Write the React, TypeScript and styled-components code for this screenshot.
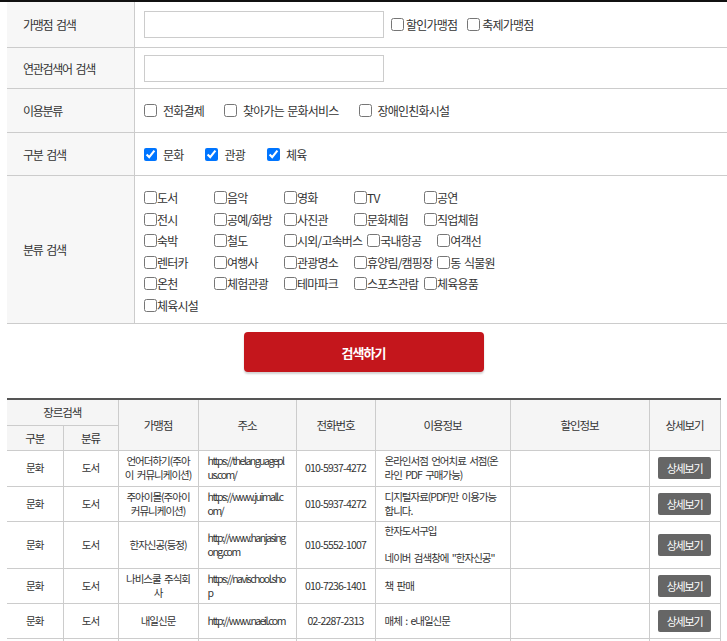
import { FC } from "react";
import styled, { createGlobalStyle } from "styled-components";

const GlobalStyle = createGlobalStyle`
  html, body {
    margin: 0;
    padding: 0;
    background: #fff;
  }
  body {
    font-family: "Noto Sans CJK KR", "Noto Sans", sans-serif;
    color: #333;
  }
`;

const TopRule = styled.div`
  height: 2px;
  background: #111;
`;

const SearchForm = styled.div`
  margin-left: 7px;
`;

const FormRow = styled.div<{ $h: number }>`
  display: grid;
  grid-template-columns: 128px 1fr;
  height: ${(p) => p.$h}px;
  border-bottom: 1px solid #ccc;
  box-sizing: border-box;
`;

const FormLabel = styled.div`
  display: flex;
  align-items: center;
  padding-left: 16px;
  background: #f7f7f7;
  border-right: 1px solid #ccc;
  font-size: 12px;
  letter-spacing: -1.3px;
  word-spacing: 2.5px;
  color: #333;
`;

const FormField = styled.div`
  display: flex;
  align-items: center;
  padding-left: 9px;
  font-size: 12px;
  letter-spacing: -0.8px;
  word-spacing: 1.5px;
  color: #333;
`;

const TextInput = styled.input`
  width: 240px;
  height: 27px;
  box-sizing: border-box;
  border: 1px solid #ccc;
  margin: 0 7px 0 0;
  padding: 0 6px;
  outline: none;
`;

const Check = styled.input.attrs({ type: "checkbox" })`
  width: 13px;
  height: 13px;
  margin: 0;
  flex: none;
`;

const Option = styled.label<{ $gap: number; $after: number }>`
  display: inline-flex;
  align-items: center;
  gap: ${(p) => p.$gap}px;
  margin-right: ${(p) => p.$after}px;
  white-space: nowrap;
`;

const CategoryBlock = styled.div`
  padding: 11px 0 0 9px;
  font-size: 12px;
  letter-spacing: -0.8px;
  word-spacing: 1.5px;
  color: #333;
`;

const CategoryLine = styled.div`
  display: flex;
  align-items: center;
  height: 21.5px;
`;

const CategoryItem = styled.label`
  display: inline-flex;
  align-items: center;
  min-width: 65px;
  margin-right: 5px;
  white-space: nowrap;
`;

const ButtonRow = styled.div`
  display: flex;
  justify-content: center;
  padding: 8px 0 26px;
`;

const SearchButton = styled.button`
  width: 240px;
  height: 40px;
  border: none;
  border-radius: 4px;
  background: #c4161c;
  box-shadow: 0 2px 2px rgba(0, 0, 0, 0.18);
  color: #fff;
  font-family: inherit;
  font-size: 13px;
  font-weight: 700;
  letter-spacing: -1px;
  cursor: pointer;
`;

const ResultTable = styled.table`
  margin-left: 7px;
  width: 713px;
  border-collapse: collapse;
  table-layout: fixed;
  border-top: 2px solid #555;
  font-size: 10.5px;
  letter-spacing: -1px;
  word-spacing: 2px;
  color: #333;
`;

const HeadCell = styled.th`
  background: #f5f5f5;
  border: 1px solid #ccc;
  border-top: none;
  font-size: 11.5px;
  font-weight: 400;
  letter-spacing: -1.1px;
  padding: 0;
  text-align: center;
  &:first-child {
    border-left: none;
  }
`;

const Row = styled.tr<{ $h: number }>`
  height: ${(p) => p.$h}px;
`;

const Cell = styled.td<{ $align?: "left" | "center"; $latin?: boolean }>`
  border: 1px solid #ccc;
  padding: 0 ${(p) => (p.$align === "left" ? "9px" : "5px")};
  text-align: ${(p) => p.$align ?? "center"};
  vertical-align: middle;
  line-height: 14px;
  word-break: ${(p) => (p.$latin ? "break-all" : "normal")};
  letter-spacing: ${(p) => (p.$latin ? "-1.5px" : "inherit")};
  &:first-child {
    border-left: none;
  }
`;

const PhoneCell = styled(Cell)`
  letter-spacing: -0.8px;
`;

const InfoText = styled.p`
  margin: 0;
  & + & {
    margin-top: 13px;
  }
`;

const DetailButton = styled.button`
  width: 53px;
  height: 22px;
  border: none;
  border-radius: 2px;
  background: #666;
  color: #fff;
  font-family: inherit;
  font-size: 11px;
  letter-spacing: -1.2px;
  padding: 0;
`;

const categories = [
  ["도서", "음악", "영화", "TV", "공연"],
  ["전시", "공예/화방", "사진관", "문화체험", "직업체험"],
  ["숙박", "철도", "시외/고속버스", "국내항공", "여객선"],
  ["렌터카", "여행사", "관광명소", "휴양림/캠핑장", "동 식물원"],
  ["온천", "체험관광", "테마파크", "스포츠관람", "체육용품"],
  ["체육시설"],
];

interface Shop {
  name: string;
  url: string;
  phone: string;
  info: string[];
  h: number;
}

const shops: Shop[] = [
  {
    name: "언어더하기(주아이 커뮤니케이션)",
    url: "https://thelanguageplus.com/",
    phone: "010-5937-4272",
    info: ["온라인서점 언어치료 서점(온라인 PDF 구매가능)"],
    h: 36,
  },
  {
    name: "주아이몰(주아이 커뮤니케이션)",
    url: "https://www.juimall.com/",
    phone: "010-5937-4272",
    info: ["디지털자료(PDF)만 이용가능 합니다."],
    h: 35,
  },
  {
    name: "한자신공(등정)",
    url: "http://www.hanjasingong.com",
    phone: "010-5552-1007",
    info: ["한자도서구입", "네이버 검색창에 \"한자신공\""],
    h: 47,
  },
  {
    name: "나비스쿨 주식회사",
    url: "https://navischool.shop",
    phone: "010-7236-1401",
    info: ["책 판매"],
    h: 35,
  },
  {
    name: "내일신문",
    url: "http://www.naeil.com",
    phone: "02-2287-2313",
    info: ["매체 : e내일신문"],
    h: 35,
  },
];

const App: FC = () => {
  return (
    <>
      <GlobalStyle />
      <TopRule />
      <SearchForm>
        <FormRow $h={46}>
          <FormLabel>가맹점 검색</FormLabel>
          <FormField>
            <TextInput type="text" />
            <Option $gap={2} $after={10}>
              <Check />
              할인가맹점
            </Option>
            <Option $gap={2} $after={0}>
              <Check />
              축제가맹점
            </Option>
          </FormField>
        </FormRow>
        <FormRow $h={41}>
          <FormLabel>연관검색어 검색</FormLabel>
          <FormField>
            <TextInput type="text" />
          </FormField>
        </FormRow>
        <FormRow $h={44}>
          <FormLabel>이용분류</FormLabel>
          <FormField>
            <Option $gap={6} $after={20}>
              <Check />
              전화결제
            </Option>
            <Option $gap={6} $after={20}>
              <Check />
              찾아가는 문화서비스
            </Option>
            <Option $gap={6} $after={0}>
              <Check />
              장애인친화시설
            </Option>
          </FormField>
        </FormRow>
        <FormRow $h={43}>
          <FormLabel>구분 검색</FormLabel>
          <FormField>
            <Option $gap={6} $after={22}>
              <Check defaultChecked />
              문화
            </Option>
            <Option $gap={6} $after={22}>
              <Check defaultChecked />
              관광
            </Option>
            <Option $gap={6} $after={0}>
              <Check defaultChecked />
              체육
            </Option>
          </FormField>
        </FormRow>
        <FormRow $h={148}>
          <FormLabel>분류 검색</FormLabel>
          <CategoryBlock>
            {categories.map((line, i) => (
              <CategoryLine key={i}>
                {line.map((c) => (
                  <CategoryItem key={c}>
                    <Check />
                    {c}
                  </CategoryItem>
                ))}
              </CategoryLine>
            ))}
          </CategoryBlock>
        </FormRow>
      </SearchForm>

      <ButtonRow>
        <SearchButton>검색하기</SearchButton>
      </ButtonRow>

      <ResultTable>
        <colgroup>
          <col style={{ width: 56 }} />
          <col style={{ width: 55 }} />
          <col style={{ width: 80 }} />
          <col style={{ width: 98 }} />
          <col style={{ width: 79 }} />
          <col style={{ width: 135 }} />
          <col style={{ width: 139 }} />
          <col style={{ width: 71 }} />
        </colgroup>
        <thead>
          <Row $h={26}>
            <HeadCell colSpan={2}>장르검색</HeadCell>
            <HeadCell rowSpan={2}>가맹점</HeadCell>
            <HeadCell rowSpan={2}>주소</HeadCell>
            <HeadCell rowSpan={2}>전화번호</HeadCell>
            <HeadCell rowSpan={2}>이용정보</HeadCell>
            <HeadCell rowSpan={2}>할인정보</HeadCell>
            <HeadCell rowSpan={2}>상세보기</HeadCell>
          </Row>
          <Row $h={25}>
            <HeadCell>구분</HeadCell>
            <HeadCell>분류</HeadCell>
          </Row>
        </thead>
        <tbody>
          {shops.map((s) => (
            <Row $h={s.h} key={s.name}>
              <Cell>문화</Cell>
              <Cell>도서</Cell>
              <Cell>{s.name}</Cell>
              <Cell $align="left" $latin>
                {s.url}
              </Cell>
              <PhoneCell $latin>{s.phone}</PhoneCell>
              <Cell $align="left">
                {s.info.map((t) => (
                  <InfoText key={t}>{t}</InfoText>
                ))}
              </Cell>
              <Cell />
              <Cell>
                <DetailButton>상세보기</DetailButton>
              </Cell>
            </Row>
          ))}
          <Row $h={35}>
            {Array.from({ length: 8 }, (_, i) => (
              <Cell key={i} />
            ))}
          </Row>
        </tbody>
      </ResultTable>
    </>
  );
};

export default App;
